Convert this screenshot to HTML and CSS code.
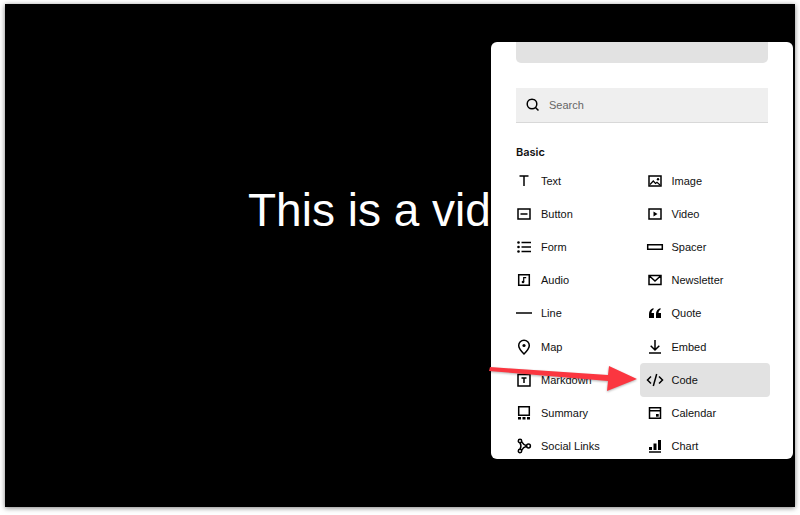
FILE: index.html
```html
<!DOCTYPE html>
<html lang="en">
<head>
  <meta charset="UTF-8">
  <meta name="viewport" content="width=device-width, initial-scale=1">
  <title>Add a block</title>
  <link rel="stylesheet" href="styles.css">
</head>
<body>
  <main class="stage">
    <h1>This is a vid</h1>

    <div class="picker">
      <div class="picker-scroll">
        <div class="preview"></div>
        <div class="search">
          <svg viewBox="0 0 16 16"><circle cx="7" cy="7" r="4.800"/><path d="M10.500 10.500l3 3"/></svg>
          <input type="search" placeholder="Search" aria-label="Search">
        </div>
        <h2>Basic</h2>
        <div class="blocks">
          <button class="block">
            <svg viewBox="0 0 18 18"><path d="M4.500 4h9M9 4v10"/></svg>Text
          </button>
          <button class="block">
            <svg viewBox="0 0 18 18"><path d="M3 4h12v10H3z"/><path class="thin" d="M4 12.500l3.300-3.500 2.200 2.500 1.500-1.300 3 2.800"/><circle class="fill" cx="12" cy="7.200" r="1.200"/></svg>Image
          </button>
          <button class="block">
            <svg viewBox="0 0 18 18"><path d="M3 4h12v10H3zM5.500 9h7"/></svg>Button
          </button>
          <button class="block">
            <svg viewBox="0 0 18 18"><path d="M3 4h12v10H3z"/><path class="fill" d="M7.500 6.500v5l4-2.500z"/></svg>Video
          </button>
          <button class="block">
            <svg viewBox="0 0 18 18"><path d="M6.500 4.500H16M6.500 9H16M6.500 13.500H16"/><circle class="fill" cx="3.500" cy="4.500" r="1.300"/><circle class="fill" cx="3.500" cy="9" r="1.300"/><circle class="fill" cx="3.500" cy="13.500" r="1.300"/></svg>Form
          </button>
          <button class="block">
            <svg viewBox="0 0 18 18"><path d="M1.700 6.700h14.600v4.600H1.700z"/></svg>Spacer
          </button>
          <button class="block">
            <svg viewBox="0 0 18 18"><path d="M3.700 3.700h10.600v10.600H3.700z"/><path class="thin" d="M8.700 11V6.700h2.500"/><circle class="fill" cx="8" cy="11" r="1.300"/></svg>Audio
          </button>
          <button class="block">
            <svg viewBox="0 0 18 18"><path d="M3 4.500h12v9H3zM3.500 5L9 10l5.500-5"/></svg>Newsletter
          </button>
          <button class="block">
            <svg viewBox="0 0 18 18"><path d="M1 9h16"/></svg>Line
          </button>
          <button class="block">
            <svg viewBox="0 0 18 18"><path class="fill" d="M7.500 4C4.500 5 3 7 3 10v4h5V9H5.500c.1-1.600.7-2.700 2-3.500zM14.500 4c-3 1-4.500 3-4.500 6v4h5V9h-2.500c.1-1.600.7-2.700 2-3.500z"/></svg>Quote
          </button>
          <button class="block">
            <svg viewBox="0 0 18 18"><path d="M9 16c-3-3-5.300-5.600-5.300-8.500a5.300 5.300 0 0 1 10.600 0C14.300 10.400 12 13 9 16z"/><circle class="fill" cx="9" cy="7.500" r="1.600"/></svg>Map
          </button>
          <button class="block">
            <svg viewBox="0 0 18 18"><path d="M9 2v10M4.700 7.800L9 12l4.300-4.200M3 15h12"/></svg>Embed
          </button>
          <button class="block">
            <svg viewBox="0 0 18 18"><path d="M3 3.500h12v11.500H3z"/><path d="M6.500 7h5M9 7v5"/></svg>Markdown
          </button>
          <button class="block selected">
            <svg viewBox="0 0 18 18"><path d="M5 5.500L1.500 9 5 12.500M13 5.500L16.500 9 13 12.500M10.700 3L7.300 15"/></svg>Code
          </button>
          <button class="block">
            <svg viewBox="0 0 18 18"><path d="M3.700 2.700h10.600v8.600H3.700z"/><path class="fill" d="M3 13h3v2.500H3zM7.500 13h3v2.500h-3zM12 13h3v2.500h-3z"/></svg>Summary
          </button>
          <button class="block">
            <svg viewBox="0 0 18 18"><path d="M3.500 3.700h11v10.600h-11zM3.500 6.700h11"/><path class="fill" d="M10 10h2.700v2.700H10z"/></svg>Calendar
          </button>
          <button class="block">
            <svg viewBox="0 0 18 18"><circle cx="5" cy="4" r="1.700"/><circle cx="5" cy="14" r="1.700"/><circle cx="13.500" cy="9" r="1.900"/><path d="M5 5.700c1.300 2.300 1.300 4.300 0 6.600M6.500 4.700c1.300 2.300 3 3.500 5.200 4M6.500 13.300c1.300-2.300 3-3.500 5.200-4"/></svg>Social Links
          </button>
          <button class="block">
            <svg viewBox="0 0 18 18"><path class="fill" d="M3 10h3v3H3zM7.500 6.500h3V13h-3zM12 3h3v10h-3z"/><path d="M3 15h12"/></svg>Chart
          </button>
        </div>
      </div>

      <svg class="arrow" viewBox="0 0 150 28" aria-hidden="true">
        <path d="M2 2L1 6l119 10-1 10 30-12-28-13-1 9z"/>
      </svg>
    </div>
  </main>
</body>
</html>
```
FILE: styles.css
```css
* {
  box-sizing: border-box;
}

body {
  margin: 0;
  padding: 4px 5px 8px;
  background: #fff;
  color: #111;
  font-family: "Liberation Sans", Arial, sans-serif;
}

.stage {
  position: relative;
  min-height: calc(100vh - 12px);
  padding-top: 178px;
  background: #000;
  box-shadow: 0 1px 5px rgba(0, 0, 0, 0.5);
}

h1 {
  margin: 0;
  padding-left: calc(50% - 152px);
  color: #fff;
  font-size: 46px;
  font-weight: 400;
  line-height: 56px;
}

/* block picker, floats over the stage */
.picker {
  position: absolute;
  top: 38px;
  right: 2px;
  bottom: 48px;
  width: 302px;
}

.picker-scroll {
  height: 100%;
  overflow: hidden;
  padding: 0 25px;
  background: #fff;
  border-radius: 6px;
}

.preview {
  height: 21px;
  background: #e2e2e2;
  border-radius: 0 0 5px 5px;
}

.search {
  display: flex;
  align-items: center;
  gap: 8px;
  height: 35px;
  margin-top: 25px;
  padding: 0 9px;
  background: #efefef;
  border-bottom: 1px solid #d8d8d8;
}

.search input {
  flex: 1;
  min-width: 0;
  padding: 0;
  border: 0;
  outline: 0;
  background: none;
  font: 11px "Liberation Sans", Arial, sans-serif;
}

.search input::placeholder {
  color: #666;
}

h2 {
  margin: 20px 0 3px;
  font-family: Inter, Arial, sans-serif;
  font-size: 11px;
  font-weight: 600;
  line-height: 18px;
}

.blocks {
  display: grid;
  grid-template-columns: 1fr 1fr;
  grid-auto-rows: 1fr;
  height: 299px;
  margin: 0 -2px 0 -7px;
}

.block {
  display: flex;
  align-items: center;
  gap: 8px;
  padding: 0 6px;
  border: 0;
  border-radius: 4px;
  background: none;
  color: #111;
  font: 11px "Liberation Sans", Arial, sans-serif;
  cursor: pointer;
}

.block:hover,
.selected {
  background: #e2e2e2;
}

.block svg,
.search svg {
  flex: none;
  width: 18px;
  height: 18px;
  fill: none;
  stroke: #000;
  stroke-width: 1.5;
}

.search svg {
  width: 16px;
  height: 16px;
}

.block .thin {
  stroke-width: 1.2;
}

.block .fill {
  fill: #000;
  stroke: none;
}

.arrow {
  position: absolute;
  top: 323px;
  left: -3px;
  width: 150px;
  height: 28px;
  fill: #fb3640;
  filter: drop-shadow(0 1px 1px rgba(0, 0, 0, 0.3));
  pointer-events: none;
}
```
